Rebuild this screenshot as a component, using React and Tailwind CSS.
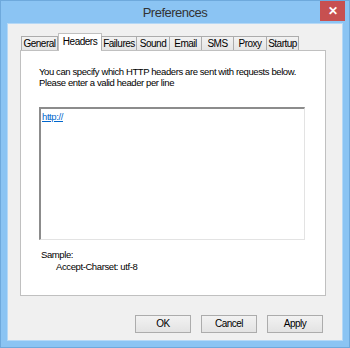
import React from "react";

const tabs = [
  { label: "General", w: "w-[37px]" },
  { label: "Headers", w: "w-[44px]", active: true },
  { label: "Failures", w: "w-[36px]" },
  { label: "Sound", w: "w-[34px]" },
  { label: "Email", w: "w-[33px]" },
  { label: "SMS", w: "w-[33px]" },
  { label: "Proxy", w: "w-[34px]" },
  { label: "Startup", w: "w-[33px]" },
];

function DialogButton({ children }) {
  return (
    <button className="w-[56px] h-[18px] border border-[#acacac] bg-gradient-to-b from-[#f2f2f2] to-[#e3e3e3] text-[10px] tracking-[-0.5px] leading-none text-black">
      {children}
    </button>
  );
}

export default function App() {
  return (
    <div
      className="w-[350px] h-[348px] bg-[#8bc4f3] border border-[#6ea9dc] flex flex-col text-black"
      style={{ fontFamily: '"Liberation Sans", Arial, sans-serif' }}
    >
      {/* title bar */}
      <div className="h-[22px] flex items-start relative">
        <div className="flex-1 text-center text-[13px] tracking-[-0.5px] leading-[24px] text-[#333]">
          Preferences
        </div>
        <div className="absolute right-[4px] top-0 w-[25px] h-[20px] bg-[#c75050] flex items-center justify-center text-white text-[12px] font-bold leading-none">
          ✕
        </div>
      </div>

      {/* client */}
      <div className="flex-1 ml-[6px] mr-[6px] mb-[6px] bg-[#f0f0f0] border border-[#b5d8f6] flex flex-col pl-[12px] pt-[9px]">
        {/* tab strip */}
        <div className="flex items-end h-[17px] pl-[1px] relative z-10 text-[10px] tracking-[-0.5px]">
          {tabs.map((t) =>
            t.active ? (
              <div
                key={t.label}
                className={`${t.w} h-[18px] -mb-[1px] bg-white border border-b-0 border-[#c0c0c0] flex items-center justify-center pb-[3px]`}
              >
                {t.label}
              </div>
            ) : (
              <div
                key={t.label}
                className={`${t.w} h-[14px] -ml-px first:ml-0 border border-b-0 border-[#acacac] bg-gradient-to-b from-[#f2f2f2] to-[#e5e5e5] flex items-center justify-center`}
              >
                {t.label}
              </div>
            )
          )}
        </div>

        {/* panel */}
        <div className="w-[306px] h-[246px] bg-white border border-[#c0c0c0] flex flex-col pl-[18px] pt-[15px] text-[9.5px] tracking-[-0.4px]">
          <p className="leading-[11px] whitespace-nowrap">
            You can specify which HTTP headers are sent with requests below.
            <br />
            Please enter a valid header per line
          </p>
          <div className="mt-[19px] w-[266px] h-[133px] border-t-2 border-l-2 border-r border-b border-t-[#8c8c8c] border-l-[#8c8c8c] border-r-[#e3e3e3] border-b-[#e3e3e3] bg-white px-[1px] pt-[1px]">
            <span className="text-[#0066cc] underline leading-[11px]">http://</span>
          </div>
          <div className="mt-[9px] pl-[2px] leading-[12px]">
            <div>Sample:</div>
            <div className="pl-[15px]">Accept-Charset: utf-8</div>
          </div>
        </div>

        {/* buttons */}
        <div className="flex justify-end gap-[10px] mt-[19px] pr-[19px]">
          <DialogButton>OK</DialogButton>
          <DialogButton>Cancel</DialogButton>
          <DialogButton>Apply</DialogButton>
        </div>
      </div>
    </div>
  );
}
